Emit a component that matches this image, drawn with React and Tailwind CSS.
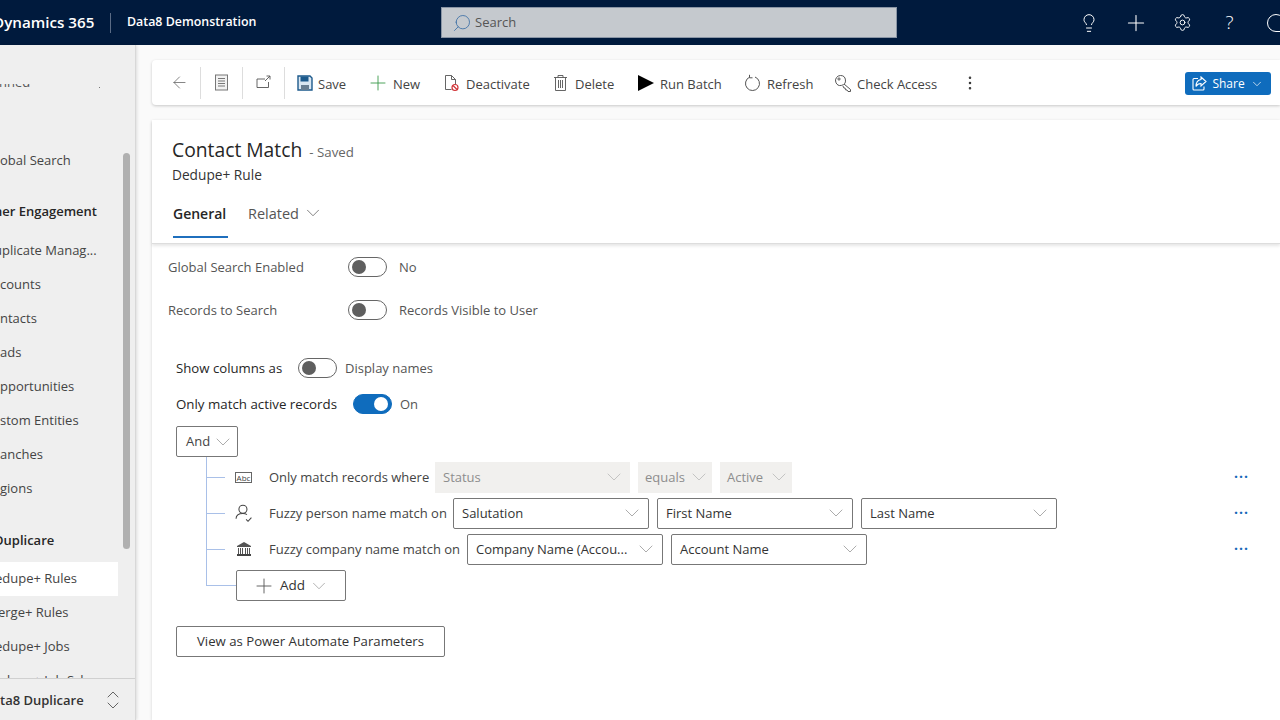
import React from "react";
import { ChevronDown, ChevronsUpDown, Plus, ArrowLeft, Lightbulb, Settings, Search, MoreVertical } from "lucide-react";

const font = { fontFamily: "'Open Sans', sans-serif" };

const SaveIcon = () => (
  <svg width="16" height="16" viewBox="0 0 16 16" className="shrink-0">
    <path d="M1 1h12l2 2v12H1z" fill="#dbe7f2" stroke="#1d5a8c" strokeWidth="1.4" />
    <rect x="3.5" y="1.5" width="8" height="5" fill="#1d5a8c" />
    <rect x="4" y="10" width="8" height="5" fill="#6a7f92" />
  </svg>
);

const DeactivateIcon = () => (
  <svg width="17" height="18" viewBox="0 0 17 18" fill="none" className="shrink-0">
    <path d="M2.5 1.5h6l4 4v5M8.5 1.5v4h4M2.5 1.5v14h6" stroke="#555" strokeWidth="0.9" />
    <circle cx="12" cy="13.5" r="3" stroke="#d13438" strokeWidth="1.2" />
    <path d="M10 11.5l4 4" stroke="#d13438" strokeWidth="1.2" />
  </svg>
);

const TrashIcon = () => (
  <svg width="15" height="18" viewBox="0 0 15 18" fill="none" stroke="#555" strokeWidth="0.9" className="shrink-0">
    <path d="M1 3.5h13M5 3.5V1.5h5v2M2.500 3.500v13h10v-13M5.500 6v8M7.500 6v8M9.500 6v8" />
  </svg>
);

const RefreshIcon = () => (
  <svg width="17" height="18" viewBox="0 0 17 18" fill="none" stroke="#555" strokeWidth="1" className="shrink-0">
    <path d="M5.5 3.2A7 7 0 1 0 11 3" />
    <path d="M5.5 0.8v3h3" />
  </svg>
);

const KeyIcon = () => (
  <svg width="18" height="18" viewBox="0 0 18 18" fill="none" stroke="#555" strokeWidth="1" className="shrink-0">
    <path d="M6.500 1.500a5 5 0 1 1-4.700 6.700A5 5 0 0 1 6.500 1.500z" />
    <circle cx="5" cy="5" r="1.100" />
    <path d="M10 10l6.500 5.500V17.500H14l-1-1.500-1.500-.2-.3-1.600-1.500-.4-.7-1.800" />
  </svg>
);

const DocIcon = () => (
  <svg width="15" height="17" viewBox="0 0 15 17" fill="none" stroke="#777" strokeWidth="1" className="shrink-0">
    <rect x="1.5" y="1" width="12" height="15" fill="#f2f2f2" />
    <path d="M4 4.500h7M4 7h7M4 9.500h7M4 12h7" />
  </svg>
);

const PopoutIcon = () => (
  <svg width="15" height="15" viewBox="0 0 15 15" fill="none" stroke="#555" strokeWidth="0.9" className="shrink-0">
    <path d="M9 4H1v8.500h11.500V7" />
    <path d="M9 6l5-5M10.500 1H14v3.500" />
  </svg>
);

const ShareIcon = () => (
  <svg width="15" height="15" viewBox="0 0 15 15" fill="none" stroke="#fff" strokeWidth="1.1" className="shrink-0">
    <path d="M6 2.500H2a1 1 0 0 0-1 1V13a1 1 0 0 0 1 1h9a1 1 0 0 0 1-1v-2.500" />
    <path d="M9 1l5 4.500L9 10V7.500C6.500 7.500 5 8.500 4 10.500 4 7 6 4 9 3.500z" />
  </svg>
);

const PersonIcon = () => (
  <svg width="18" height="18" viewBox="0 0 17 17" fill="none" stroke="#444" strokeWidth="1" className="shrink-0">
    <circle cx="7.500" cy="5" r="3.800" />
    <path d="M1 14c0-3 2.500-5 6.500-5 1.500 0 2.800.3 3.800 1" />
    <path d="M10.500 14.500l1.800 1.800 3.200-3.500" />
  </svg>
);

const BankIcon = () => (
  <svg width="16" height="16" viewBox="0 0 16 16" className="shrink-0">
    <path d="M8 1l7 4v1H1V5z" fill="#555" />
    <path d="M2.500 7v6M4.500 7v6M6.500 7v6M9.500 7v6M11.500 7v6M13.500 7v6" stroke="#555" strokeWidth="1" />
    <rect x="1" y="13" width="14" height="2" fill="#444" />
  </svg>
);

function NavItem({ label, active, bold, top, shift }) {
  return (
    <div className={`h-[34px] flex items-center whitespace-nowrap shrink-0 w-[118px] text-[13px] overflow-hidden ${active ? "bg-white" : ""} ${bold ? "font-semibold text-[#262626]" : "text-[#444]"} ${top || ""}`}>
      <span className={shift || ""}>{label}</span>
    </div>
  );
}

function Toggle({ on }) {
  return (
    <div className={`w-[39px] h-[20px] rounded-full border flex items-center px-[3px] shrink-0 ${on ? "bg-[#0f6cbd] border-[#0f6cbd] justify-end" : "bg-white border-[#666] justify-start"}`}>
      <div className={`w-[14px] h-[14px] rounded-full ${on ? "bg-white" : "bg-[#5f5f5f]"}`} />
    </div>
  );
}

function Drop({ label, w, disabled, small }) {
  return (
    <div className={`h-[31px] flex items-center justify-between text-[13px] shrink-0 ${w} ${small ? "pl-[7px] pr-[1px]" : "pl-[8px] pr-[4px]"} ${disabled ? "bg-[#f1f0ee] text-[#8d8d8d]" : "bg-white border border-[#777] rounded-[2px] text-[#333]"}`}>
      <span className="whitespace-nowrap pt-px">{label}</span>
      <ChevronDown className={`w-[24px] h-[24px] shrink-0 ${disabled ? "text-[#b0b0b0]" : "text-[#888]"}`} strokeWidth={0.7} />
    </div>
  );
}

function Cmd({ icon, label, gap }) {
  return (
    <div className={`flex items-center text-[13px] text-[#444] whitespace-nowrap ${gap}`}>
      {icon}
      <span className="pt-[4px]">{label}</span>
    </div>
  );
}

const Dots = () => <div className="ml-auto mr-[31px] text-[#1769b8] text-[14px] font-bold tracking-[1px] leading-none pb-2">...</div>;

function RuleRow({ icon, label, children, labelW }) {
  return (
    <div className="flex items-center h-[36px]">
      <div className="w-[19px] h-px bg-[#a9c0e8] ml-[30px] shrink-0" />
      <div className="w-[15px] ml-[11px] mr-[18px] flex justify-center shrink-0">{icon}</div>
      <div className={`text-[13px] text-[#444] whitespace-nowrap shrink-0 pt-px ${labelW}`}>{label}</div>
      <div className="flex items-center gap-2">{children}</div>
      <Dots />
    </div>
  );
}

export default function App() {
  return (
    <div className="w-[1280px] h-[720px] overflow-hidden flex flex-col bg-[#fafafa]" style={font}>
      <header className="h-[45px] bg-[#001a3d] text-white flex items-center shrink-0">
        <div className="ml-[-7px] w-[105px] shrink-0 text-[15.200px] font-semibold whitespace-nowrap">Dynamics 365</div>
        <div className="w-px h-[20px] bg-[#5a6b85] ml-[12px] shrink-0" />
        <div className="ml-[16px] w-[314px] shrink-0 text-[12.400px] font-semibold whitespace-nowrap">Data8 Demonstration</div>
        <div className="h-[31px] w-[456px] shrink-0 bg-[#c5c9ce] border border-[#8a95a5] flex items-center pl-[10px] gap-[3px] text-[13px] text-[#555]">
          <Search className="w-[20px] h-[20px] text-[#3a6ea5] -scale-x-100" strokeWidth={1} />
          <span>Search</span>
        </div>
        <div className="flex items-center ml-[168px] shrink-0">
          <div className="w-[47px] flex justify-center"><Lightbulb className="w-[20px] h-[20px]" strokeWidth={1.2} /></div>
          <div className="w-[47px] flex justify-center"><Plus className="w-[26px] h-[26px]" strokeWidth={1} /></div>
          <div className="w-[47px] flex justify-center"><Settings className="w-[19px] h-[19px]" strokeWidth={1.2} /></div>
          <div className="w-[47px] text-center text-[19px] font-light leading-none">?</div>
          <div className="w-[18px] h-[18px] ml-[14px] rounded-full rounded-br-none border border-white shrink-0" />
        </div>
      </header>

      <div className="flex flex-1 min-h-0">
        <aside className="w-[136px] shrink-0 bg-[#efefef] border-r border-[#d8d8d8] shadow-[1px_0_3px_rgba(0,0,0,0.12)] relative flex flex-col">
          <div className="flex-1 min-h-0 overflow-hidden flex flex-col">
            <div className="mt-[39px] h-[6px] w-[100px] shrink-0 overflow-hidden flex justify-between">
              <span className="block -mt-[11px] -ml-[12px] text-[13px] leading-[18px] text-[#555]">Pinned</span>
              <span className="block mt-[3px] w-px h-px bg-[#777]" />
            </div>
            <NavItem label="obal Search" top="mt-[54px]" />
            <NavItem label="ner Engagement" bold top="mt-[17px]" shift="-ml-[6px]" />
            <NavItem label="uplicate Manag..." top="mt-[5px]" shift="-ml-[6px]" />
            <NavItem label="counts" />
            <NavItem label="ntacts" />
            <NavItem label="ads" />
            <NavItem label="pportunities" />
            <NavItem label="stom Entities" />
            <NavItem label="anches" />
            <NavItem label="gions" />
            <NavItem label="Duplicare" bold top="mt-[18px]" shift="-ml-[6px]" />
            <NavItem label="edupe+ Rules" active top="mt-[4px]" shift="-ml-[5px]" />
            <NavItem label="erge+ Rules" shift="-ml-[2px]" />
            <NavItem label="edupe+ Jobs" shift="-ml-[5px]" />
            <NavItem label="edupe+ Job Sch" shift="-ml-[5px]" />
          </div>
          <div className="h-[42px] shrink-0 border-t border-[#d0d0d0] bg-[#efefef] flex items-center justify-between pr-[10px] text-[13px] font-semibold text-[#333] whitespace-nowrap">
            <span className="pt-[2px]">ta8 Duplicare</span>
            <ChevronsUpDown className="w-[24px] h-[24px] text-[#555]" strokeWidth={0.9} />
          </div>
          <div className="absolute left-[123px] top-[108px] w-[7px] h-[396px] bg-[#b0b0b0] rounded-full" />
        </aside>

        <main className="flex-1 min-w-0 pl-[16px] pt-[15px] flex flex-col">
          <div className="h-[45px] bg-white rounded-l-[4px] shadow-[0_1px_3px_rgba(0,0,0,0.2)] flex items-center pl-[18px] pr-[9px] shrink-0">
            <ArrowLeft className="w-[19px] h-[19px] text-[#555]" strokeWidth={0.9} />
            <div className="w-px h-[32px] bg-[#ddd] ml-[11px]" />
            <div className="w-[41px] flex justify-center"><DocIcon /></div>
            <div className="w-px h-[32px] bg-[#ddd]" />
            <div className="w-[41px] flex justify-center"><PopoutIcon /></div>
            <div className="w-px h-[32px] bg-[#ddd] mr-[12px]" />
            <div className="flex items-center">
              <Cmd icon={<SaveIcon />} label="Save" gap="gap-[5px] w-[72px]" />
              <Cmd icon={<Plus className="w-[24px] h-[24px] text-[#3a9a4a] shrink-0" strokeWidth={0.9} />} label="New" gap="gap-[3px] w-[77px] -ml-[3px]" />
              <Cmd icon={<DeactivateIcon />} label="Deactivate" gap="gap-[6px] w-[110px]" />
              <Cmd icon={<TrashIcon />} label="Delete" gap="gap-[7px] w-[85px]" />
              <Cmd icon={<svg width="16" height="18" viewBox="0 0 16 18" className="shrink-0"><path d="M0 1l16 8-16 8z" fill="#000" /></svg>} label="Run Batch" gap="gap-[6px] w-[106px]" />
              <Cmd icon={<RefreshIcon />} label="Refresh" gap="gap-[6px] w-[90px]" />
              <Cmd icon={<KeyIcon />} label="Check Access" gap="gap-[5px] w-[127px]" />
              <MoreVertical className="w-[18px] h-[18px] text-[#333]" strokeWidth={1.4} />
            </div>
            <div className="ml-auto mt-[2px] h-[23px] w-[86px] rounded-[3px] bg-[#0f6cbd] text-white text-[12px] flex items-center justify-center gap-[5px]">
              <ShareIcon />
              <span>Share</span>
              <ChevronDown className="w-[14px] h-[14px]" strokeWidth={1.2} />
            </div>
          </div>

          <div className="flex-1 min-h-0 mt-[15px] bg-white shadow-[0_1px_3px_rgba(0,0,0,0.15)] flex flex-col">
            <div className="h-[124px] shrink-0 border-b border-[#ddd] shadow-[0_2px_3px_rgba(0,0,0,0.1)] pl-[20px] flex flex-col">
              <div className="mt-[16px] flex items-baseline gap-[7px]">
                <span className="text-[19.300px] font-medium text-[#262626]">Contact Match</span>
                <span className="text-[13.300px] text-[#666]">- Saved</span>
              </div>
              <div className="text-[13.700px] text-[#333]">Dedupe+ Rule</div>
              <div className="flex mt-[15px] gap-[20px] text-[14.500px] h-[38px]">
                <div className="font-semibold text-[14px] text-[#262626] border-b-[2px] border-[#1f6fbd] h-[38px] ml-px leading-[27px] w-[55px] whitespace-nowrap">General</div>
                <div className="text-[#555] flex items-start gap-[3px] leading-[27px]">Related <ChevronDown className="w-[22px] h-[22px] mt-[2px]" strokeWidth={0.8} /></div>
              </div>
            </div>

            <div className="pl-[16px] flex flex-col">
              <div className="flex items-center h-[20px] mt-[13px] text-[13px] text-[#555]">
                <div className="w-[180px] pt-px">Global Search Enabled</div>
                <Toggle />
                <div className="ml-[12px] pt-px">No</div>
              </div>
              <div className="flex items-center h-[20px] mt-[23px] text-[13px] text-[#555]">
                <div className="w-[180px] pt-px">Records to Search</div>
                <Toggle />
                <div className="ml-[12px] pt-px">Records Visible to User</div>
              </div>

              <div className="pl-[8px] flex flex-col">
                <div className="flex items-center h-[20px] mt-[38px] text-[13px]">
                  <div className="w-[122px] text-[13.200px] text-[#262626] pt-px whitespace-nowrap">Show columns as</div>
                  <Toggle />
                  <div className="ml-[8px] text-[#555] pt-px">Display names</div>
                </div>
                <div className="flex items-center h-[20px] mt-[16px] text-[13px]">
                  <div className="w-[177px] text-[13.300px] text-[#262626] pt-px whitespace-nowrap">Only match active records</div>
                  <Toggle on />
                  <div className="ml-[8px] text-[#555] pt-px">On</div>
                </div>

                <div className="h-[31px] w-[62px] mt-[12px] border border-[#777] rounded-[2px] flex items-center justify-between pl-[9px] pr-[2px] text-[13px] text-[#444]">
                  And <ChevronDown className="w-[24px] h-[24px] text-[#888]" strokeWidth={0.7} />
                </div>

                <div className="relative flex flex-col">
                  <div className="absolute left-[30px] top-0 h-[128px] w-px bg-[#a9c0e8]" />
                  <div className="mt-[2px]" />
                  <RuleRow icon={<span className="border border-[#666] text-[8px] leading-[9px] px-px text-[#444]">Abc</span>} label="Only match records where" labelW="w-[166px]">
                    <Drop label="Status" w="w-[195px]" disabled />
                    <Drop label="equals" w="w-[74px]" disabled small />
                    <Drop label="Active" w="w-[72px]" disabled small />
                  </RuleRow>
                  <RuleRow icon={<PersonIcon />} label="Fuzzy person name match on" labelW="w-[184px]">
                    <Drop label="Salutation" w="w-[196px]" />
                    <Drop label="First Name" w="w-[196px]" />
                    <Drop label="Last Name" w="w-[196px]" />
                  </RuleRow>
                  <RuleRow icon={<BankIcon />} label="Fuzzy company name match on" labelW="w-[198px]">
                    <Drop label="Company Name (Accou..." w="w-[196px]" />
                    <Drop label="Account Name" w="w-[196px]" />
                  </RuleRow>
                  <div className="flex items-center h-[31px] mt-[3px]">
                    <div className="w-[30px] h-px bg-[#a9c0e8] ml-[30px] shrink-0" />
                    <div className="h-[31px] w-[110px] border border-[#777] rounded-[2px] flex items-center pl-[15px] text-[13.500px] text-[#333]">
                      <Plus className="w-[24px] h-[24px] text-[#555] shrink-0" strokeWidth={0.9} />
                      <span className="ml-[4px]">Add</span>
                      <ChevronDown className="w-[22px] h-[22px] text-[#888] ml-[3px] shrink-0" strokeWidth={0.7} />
                    </div>
                  </div>
                </div>

                <div className="h-[31px] w-[269px] mt-[25px] border border-[#777] rounded-[2px] flex items-center justify-center text-[13.200px] text-[#333] whitespace-nowrap">
                  View as Power Automate Parameters
                </div>
              </div>
            </div>
          </div>
        </main>
      </div>
    </div>
  );
}
